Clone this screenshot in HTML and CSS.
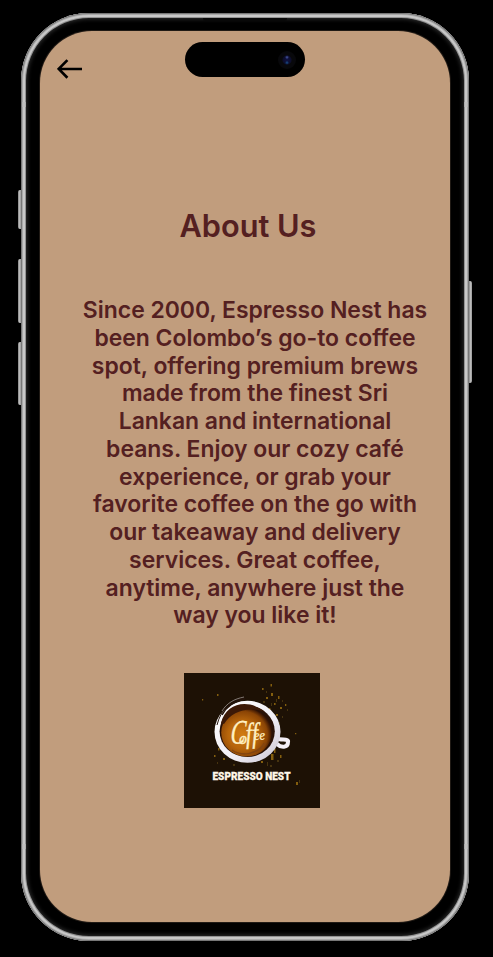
FILE: index.html
```html
<!DOCTYPE html>
<html lang="en">
<head>
<meta charset="utf-8">
<title>About Us - Espresso Nest</title>
<link rel="stylesheet" href="styles.css">
</head>
<body>
<div class="phone">
  <span class="key key-action"></span>
  <span class="key key-up"></span>
  <span class="key key-down"></span>
  <span class="key key-power"></span>
  <span class="earpiece"></span>
  <span class="seam seam-top-left"></span>
  <span class="seam seam-top-right"></span>
  <span class="seam seam-bottom-left"></span>
  <span class="seam seam-bottom-right"></span>
  <main class="screen">
    <div class="island"><span class="lens"></span></div>
    <a class="back" aria-label="Back">
      <svg width="26" height="20" viewBox="0 0 26 20" fill="none" stroke="#000" stroke-width="2.7"><path d="M25 10H1.8M10.4 1.1L1.7 9.9l8.7 8.8"/></svg>
    </a>
    <h1 class="title">About Us</h1>
    <p class="story">Since 2000, Espresso Nest has<br>been Colombo’s go-to coffee<br>spot, offering premium brews<br>made from the finest Sri<br>Lankan and international<br>beans. Enjoy our cozy café<br>experience, or grab your<br>favorite coffee on the go with<br>our takeaway and delivery<br>services. Great coffee,<br>anytime, anywhere just the<br>way you like it!</p>
    <svg class="logo" width="136" height="135" viewBox="0 0 136 135">
      <defs>
        <radialGradient id="coffee" cx=".42" cy=".55" r=".58">
          <stop offset="0" stop-color="#d27c12"/>
          <stop offset=".5" stop-color="#b7650b"/>
          <stop offset=".85" stop-color="#8a4405"/>
          <stop offset="1" stop-color="#351303"/>
        </radialGradient>
        <linearGradient id="china" x1="0" y1="0" x2="1" y2="1">
          <stop offset="0" stop-color="#fff"/>
          <stop offset=".6" stop-color="#f0edf4"/>
          <stop offset="1" stop-color="#c8c2cf"/>
        </linearGradient>
      </defs>
      <rect width="136" height="135" fill="#1d1105"/>
      <g fill="#a67812" opacity=".75">
        <path d="M78 15h1.6v2H78zM86.5 11h1.5v2.5h-1.5zM87 20h2v3h-2zM82 24h2v2h-2zM94 23h1.5v3H94zM90 30h1.6v2H90zM96 34h2v2h-2zM85 35h1.4v2H85zM101 31h1.3v2H101zM92 41h2v2h-2zM33 21h1.5v2H33zM18 26h1.2v1.4H18zM111 60h1.3v1.3H111zM34 75h1.5v2.5H34zM30 82h1.5v2H30zM39 85h2v2h-2zM87 81h2.5v6H87zM90 76h1.5v4H90zM77 88h2v2h-2zM96 82h1.5v3H96zM112 109h2v3h-2z"/>
      </g>
      <g fill="#624b16" opacity=".6">
        <path d="M82 18h1v2h-1zM79 28h2v2h-2zM92 26h1v3h-1zM87 30h1v3h-1zM98 27h1v2h-1zM103 36h1v2h-1zM94 49h2v2h-2zM98 43h1v2h-1zM36 68h1v2h-1zM33 89h1v2h-1zM49 91h2v2h-2zM93 87h2v2h-2zM86 92h2v2h-2zM83 89h1v4h-1zM115 107h1v3h-1z"/>
      </g>
      <path d="M92 65C97 68 105 65 104 69C104 75 97 75 93 71" fill="none" stroke="#f3eff7" stroke-width="4"/>
      <ellipse cx="63.5" cy="58.8" rx="33" ry="31" fill="url(#china)"/>
      <ellipse cx="63.2" cy="58.3" rx="27.6" ry="25.7" fill="#291106"/>
      <ellipse cx="62.5" cy="59.6" rx="25.3" ry="24" fill="url(#coffee)"/>
      <path d="M37 50C42 30 64 25 81 39C64 33 48 38 40 51" fill="#3c1907"/>
      <path d="M33 52C37 36 47 27 61 25" fill="none" stroke="#24140b" stroke-width="1"/>
      <path d="M38 42C43 32 51 28 61 26" fill="none" stroke="#24140b" stroke-width="1.5"/>
      <path d="M38 38C43 30 50 26 60 24" fill="none" stroke="#aca5a2" stroke-width=".7"/>
      <path d="M48 77C58 84 75 81 82 70M57 81C68 82 77 76 80 70" fill="none" stroke="#824410" stroke-width="1.2"/>
      <g class="script">
        <text transform="translate(46 71) rotate(-4) skewX(-8) scale(.82 1.2)" font-size="28">C</text>
        <text transform="translate(55 71)" font-size="16">o</text>
        <text transform="translate(62 70) rotate(-2) scale(.9 1.15)" font-size="25">ff</text>
        <text transform="translate(70 67) rotate(-2) scale(.9 1)" font-size="14">ee</text>
      </g>
      <text class="brand" x="28.5" y="106.6" textLength="78" lengthAdjust="spacingAndGlyphs">ESPRESSO NEST</text>
    </svg>
  </main>
</div>
</body>
</html>
```

FILE: styles.css
```css
* { box-sizing: border-box; }

body {
  margin: 0;
  height: 957px;
  padding: 13px 0 0 21px;
  overflow: hidden;
  background: #000;
  font-family: Inter, "Liberation Sans", sans-serif;
}

.phone {
  position: relative;
  width: 448px;
  height: 928px;
  padding: 18px 19px 19px;
  border-radius: 68px;
  background: #000;
  box-shadow:
    inset 0 0 0 1px #777,
    inset 0 0 0 2px #a8a8a8,
    inset 0 0 0 4px #c8c8c8,
    inset 0 0 0 5px #939393,
    inset 0 0 4px 6px #303030;
}

.screen {
  position: relative;
  display: flex;
  flex-direction: column;
  width: 410px;
  height: 891px;
  padding: 28px 0 0 17px;
  border-radius: 52px;
  background: #c19d7d;
  box-shadow: 0 0 0 1px #201a15;
}

.island {
  position: absolute;
  top: 11px;
  left: 145px;
  width: 120px;
  height: 35px;
  border-radius: 18px;
  background: #000;
}

.lens {
  position: absolute;
  top: 9px;
  right: 9px;
  width: 18px;
  height: 18px;
  border-radius: 50%;
  background:
    radial-gradient(circle at 50% 35%, #4858a5 0, transparent 2px),
    radial-gradient(circle at 50% 65%, #174f8c 0, transparent 2px),
    radial-gradient(circle, #101241 0, #0c0d2c 4px, #08080b 5px);
}

.back { height: 20px; }
.back svg { display: block; }

.title {
  margin: 128px 0 0;
  padding-right: 11px;
  color: #542021;
  font-size: 30.7px;
  font-weight: 600;
  line-height: 38px;
  text-align: center;
}

.story {
  margin: 52px 0 0;
  padding-left: 3px;
  color: #542021;
  font-size: 22.93px;
  font-weight: 600;
  line-height: 27.75px;
  text-align: center;
  white-space: nowrap;
}

.logo {
  display: block;
  margin: 43px 0 0 127px;
}

.script {
  fill: #fff0c2;
  stroke: #fff0c2;
  stroke-width: .3px;
  font-family: "Liberation Serif", serif;
  font-style: italic;
  font-weight: 400;
}

.brand {
  fill: #fff7e9;
  stroke: #fff7e9;
  stroke-width: .3px;
  font-family: Roboto, sans-serif;
  font-size: 11.6px;
  font-weight: 900;
}

.key {
  position: absolute;
  left: -3px;
  width: 3px;
  border-radius: 2px 0 0 2px;
  background: linear-gradient(90deg, #858585, #bbb 50%, #999);
}

.key-action { top: 177px; height: 39px; }
.key-up { top: 246px; height: 64px; }
.key-down { top: 329px; height: 63px; }
.key-power {
  top: 268px;
  right: -3px;
  left: auto;
  height: 102px;
  border-radius: 0 2px 2px 0;
}

.earpiece {
  position: absolute;
  top: 5px;
  left: 182px;
  width: 84px;
  height: 3px;
  border-radius: 0 0 4px 4px;
  background: #080808;
}

.seam {
  position: absolute;
  width: 4px;
  height: 5px;
  background: #bdbdbd;
  opacity: .6;
}

.seam-top-left { top: 89px; left: 1px; }
.seam-top-right { top: 89px; right: 1px; }
.seam-bottom-left { bottom: 92px; left: 1px; }
.seam-bottom-right { bottom: 92px; right: 1px; }
```
